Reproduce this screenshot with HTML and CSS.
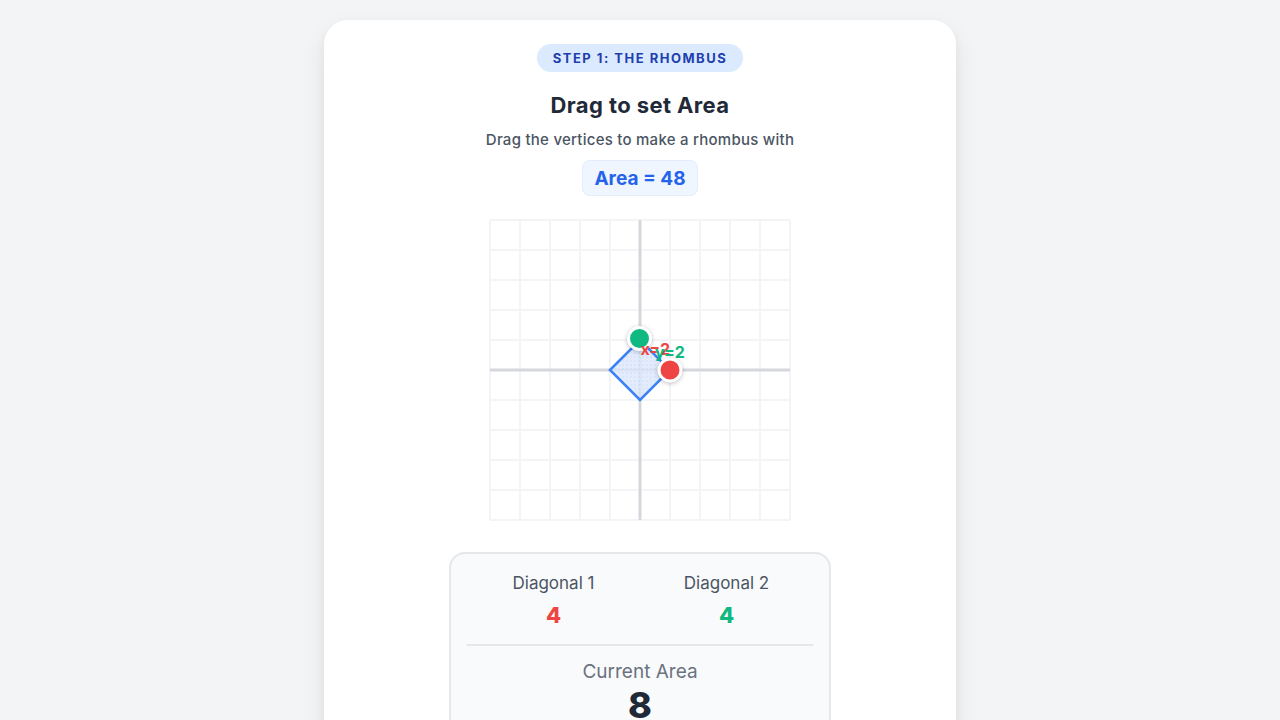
FILE: index.html
```html
<!DOCTYPE html>
<html>
<head>
<meta charset="utf-8">
<link rel="stylesheet" href="styles.css">
</head>
<body>
<main class="card">
  <div class="badge">Step 1: The Rhombus</div>
  <h1 class="title">Drag to set Area</h1>
  <p class="subtitle">Drag the vertices to make a rhombus with</p>
  <div class="target">Area = 48</div>
  <svg class="board" width="304" height="304" viewBox="-2 -2 304 304">
    <defs>
      <pattern id="dots" width="4" height="4" patternUnits="userSpaceOnUse">
        <rect width="4" height="4" fill="#dbe7fb"/>
        <circle cx="1" cy="1" r="0.6" fill="#a9c3ef"/>
      </pattern>
    </defs>
    <g stroke="#f3f4f6" stroke-width="2">
      <line x1="0" y1="0" x2="0" y2="300"/>
      <line x1="30" y1="0" x2="30" y2="300"/>
      <line x1="60" y1="0" x2="60" y2="300"/>
      <line x1="90" y1="0" x2="90" y2="300"/>
      <line x1="120" y1="0" x2="120" y2="300"/>
      <line x1="180" y1="0" x2="180" y2="300"/>
      <line x1="210" y1="0" x2="210" y2="300"/>
      <line x1="240" y1="0" x2="240" y2="300"/>
      <line x1="270" y1="0" x2="270" y2="300"/>
      <line x1="300" y1="0" x2="300" y2="300"/>
      <line x1="0" y1="0" x2="300" y2="0"/>
      <line x1="0" y1="30" x2="300" y2="30"/>
      <line x1="0" y1="60" x2="300" y2="60"/>
      <line x1="0" y1="90" x2="300" y2="90"/>
      <line x1="0" y1="120" x2="300" y2="120"/>
      <line x1="0" y1="180" x2="300" y2="180"/>
      <line x1="0" y1="210" x2="300" y2="210"/>
      <line x1="0" y1="240" x2="300" y2="240"/>
      <line x1="0" y1="270" x2="300" y2="270"/>
      <line x1="0" y1="300" x2="300" y2="300"/>
    </g>
    <g stroke="#d5d7dd" stroke-width="3">
      <line x1="150" y1="0" x2="150" y2="300"/>
      <line x1="0" y1="150" x2="300" y2="150"/>
    </g>
    <polygon points="120,150 150,120 180,150 150,180" fill="url(#dots)" fill-opacity="0.8" stroke="#3b82f6" stroke-width="2.5" stroke-linejoin="miter"/>
    <g class="handle">
      <circle cx="149.5" cy="118.5" r="11" fill="#10b981" stroke="#ffffff" stroke-width="3"/>
    </g>
    <text class="lbl lbl-x" x="150.5" y="135">x=2</text>
    <text class="lbl lbl-y" x="165" y="138">y=2</text>
    <g class="handle">
      <circle cx="180" cy="150" r="11" fill="#ef4444" stroke="#ffffff" stroke-width="3"/>
    </g>
  </svg>
  <section class="stats">
    <div class="diags">
      <div class="stat">
        <div class="stat-label">Diagonal 1</div>
        <div class="stat-value red">4</div>
      </div>
      <div class="stat">
        <div class="stat-label">Diagonal 2</div>
        <div class="stat-value green">4</div>
      </div>
    </div>
    <div class="current">
      <div class="current-label">Current Area</div>
      <div class="current-value">8</div>
    </div>
  </section>
</main>
</body>
</html>
```
FILE: styles.css
```css
html, body {
  margin: 0;
  padding: 0;
}
body {
  background: #f3f4f6;
  font-family: Inter, "Noto Sans", "Liberation Sans", sans-serif;
  height: 720px;
  overflow: hidden;
}
.card {
  width: 632px;
  margin: 20px auto 0;
  background: #ffffff;
  border-radius: 24px;
  box-shadow: 0 10px 25px rgba(0, 0, 0, 0.08), 0 4px 10px rgba(0, 0, 0, 0.04);
  padding: 24px 0 40px;
  display: flex;
  flex-direction: column;
  align-items: center;
  box-sizing: border-box;
  min-height: 760px;
}
.badge {
  height: 28px;
  line-height: 28px;
  padding: 0 16px;
  border-radius: 14px;
  background: #dbeafe;
  color: #1e40af;
  font-size: 13px;
  font-weight: 700;
  letter-spacing: 1.5px;
  text-transform: uppercase;
}
.title {
  margin: 19px 0 0;
  font-size: 22px;
  line-height: 28px;
  font-weight: 700;
  letter-spacing: 0.4px;
  color: #1f2937;
}
.subtitle {
  margin: 11px 0 0;
  font-size: 15px;
  line-height: 20px;
  font-weight: 500;
  letter-spacing: 0.25px;
  color: #4b5563;
}
.target {
  margin-top: 10px;
  height: 36px;
  line-height: 36px;
  padding: 0 11px;
  border-radius: 8px;
  background: #eff6ff;
  border: 1px solid #e4edfb;
  box-sizing: border-box;
  color: #2563eb;
  font-size: 19px;
  font-weight: 700;
}
.board {
  display: block;
  margin-top: 22px;
  overflow: visible;
}
.handle {
  filter: drop-shadow(0 1px 2px rgba(0, 0, 0, 0.25));
}
.lbl {
  font-family: Inter, "Liberation Sans", sans-serif;
  font-size: 16px;
  font-weight: 700;
}
.lbl-x { fill: #ef4444; }
.lbl-y { fill: #10b981; }
.stats {
  margin-top: 30px;
  width: 382px;
  box-sizing: border-box;
  border: 2px solid #e5e7eb;
  border-radius: 16px;
  background: #f9fafb;
  padding: 17px 16px 20px;
}
.diags {
  display: grid;
  grid-template-columns: 1fr 1fr;
  padding-bottom: 15px;
  border-bottom: 2px solid #e5e7eb;
}
.stat {
  display: flex;
  flex-direction: column;
  align-items: center;
}
.stat-label {
  font-size: 17px;
  line-height: 24px;
  color: #4b5563;
}
.stat-value {
  margin-top: 6px;
  font-size: 22px;
  line-height: 28px;
  font-weight: 800;
}
.red { color: #ef4444; }
.green { color: #10b981; }
.current {
  display: flex;
  flex-direction: column;
  align-items: center;
  padding-top: 13px;
}
.current-label {
  font-size: 19px;
  line-height: 26px;
  color: #6b7280;
}
.current-value {
  font-size: 36px;
  line-height: 40px;
  font-weight: 800;
  color: #1f2937;
}
```
